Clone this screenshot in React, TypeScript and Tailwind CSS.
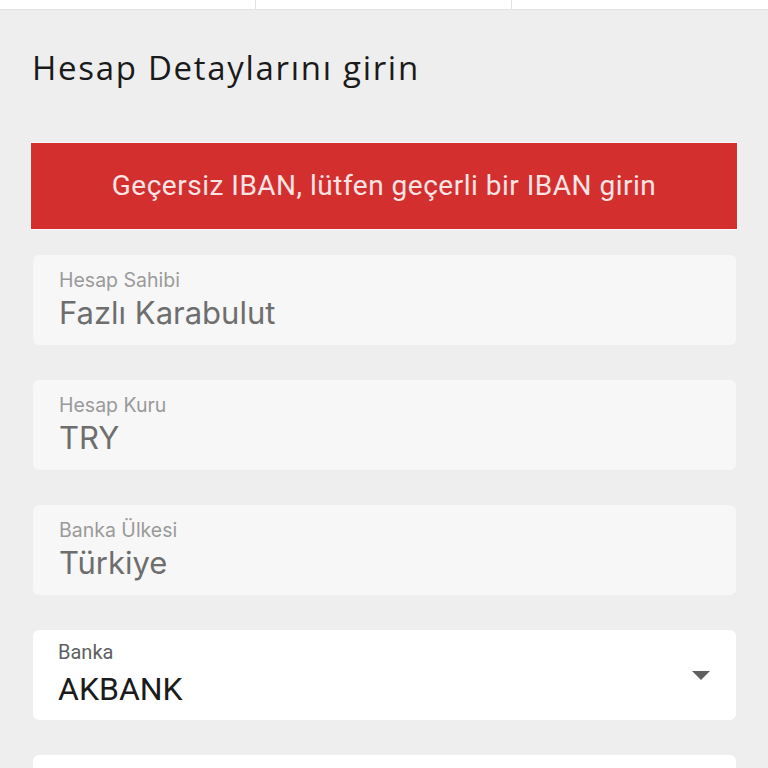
export default function App() {
  const readonlyFields = [
    { label: "Hesap Sahibi", value: "Fazlı Karabulut" },
    { label: "Hesap Kuru", value: "TRY" },
    { label: "Banka Ülkesi", value: "Türkiye" },
  ];

  return (
    <div className="w-[768px] h-[768px] overflow-hidden bg-[#eeeeee]">
      {/* tab strip at the top */}
      <div className="grid grid-cols-3 h-[10px] bg-white border-b border-[#e2e2e2] divide-x divide-[#e2e2e2]">
        <div />
        <div />
        <div />
      </div>

      <div className="px-[32px]">
        <h1 className="mt-[36px] text-[33px] leading-[44px] font-medium text-[#1a1a1a] font-['Open_Sans',sans-serif] tracking-[1.7px]">
          Hesap Detaylarını girin
        </h1>

        {/* error banner */}
        <div className="mt-[53px] -mx-[1px] h-[86px] flex items-center justify-center bg-[#d32f2f] shadow-[0_0_0_1px_rgba(255,255,255,0.5)]">
          <span className="text-[28px] tracking-[0.5px] text-[#fbe4e4] font-['Roboto',sans-serif]">
            Geçersiz IBAN, lütfen geçerli bir IBAN girin
          </span>
        </div>

        <div className="mt-[26px] ml-[1px] w-[703px] flex flex-col gap-[35px]">
          {readonlyFields.map((f) => (
            <div
              key={f.label}
              className="h-[90px] rounded-[6px] bg-[#f7f7f7] pt-[13px] px-[26px] font-['Inter',sans-serif]"
            >
              <div className="text-[19.5px] leading-[24px] text-[#9a9a9a]">{f.label}</div>
              <div className="mt-[3px] text-[31px] leading-[36px] text-[#6e6e6e]">{f.value}</div>
            </div>
          ))}

          {/* bank select */}
          <div className="h-[90px] rounded-[6px] bg-white flex items-center justify-between pl-[25px] pr-[25px] font-['Roboto',sans-serif]">
            <div className="pb-[4px]">
              <div className="text-[20px] leading-[24px] text-[#5f5f5f]">Banka</div>
              <div className="mt-[7px] text-[32px] leading-[36px] text-[#1b1b1b]">AKBANK</div>
            </div>
            <svg width="20" height="11" viewBox="0 0 20 11">
              <path d="M1 1 L19 1 L10 10 Z" fill="#616161" />
            </svg>
          </div>

          <div className="h-[90px] rounded-[6px] bg-white" />
        </div>
      </div>
    </div>
  );
}
